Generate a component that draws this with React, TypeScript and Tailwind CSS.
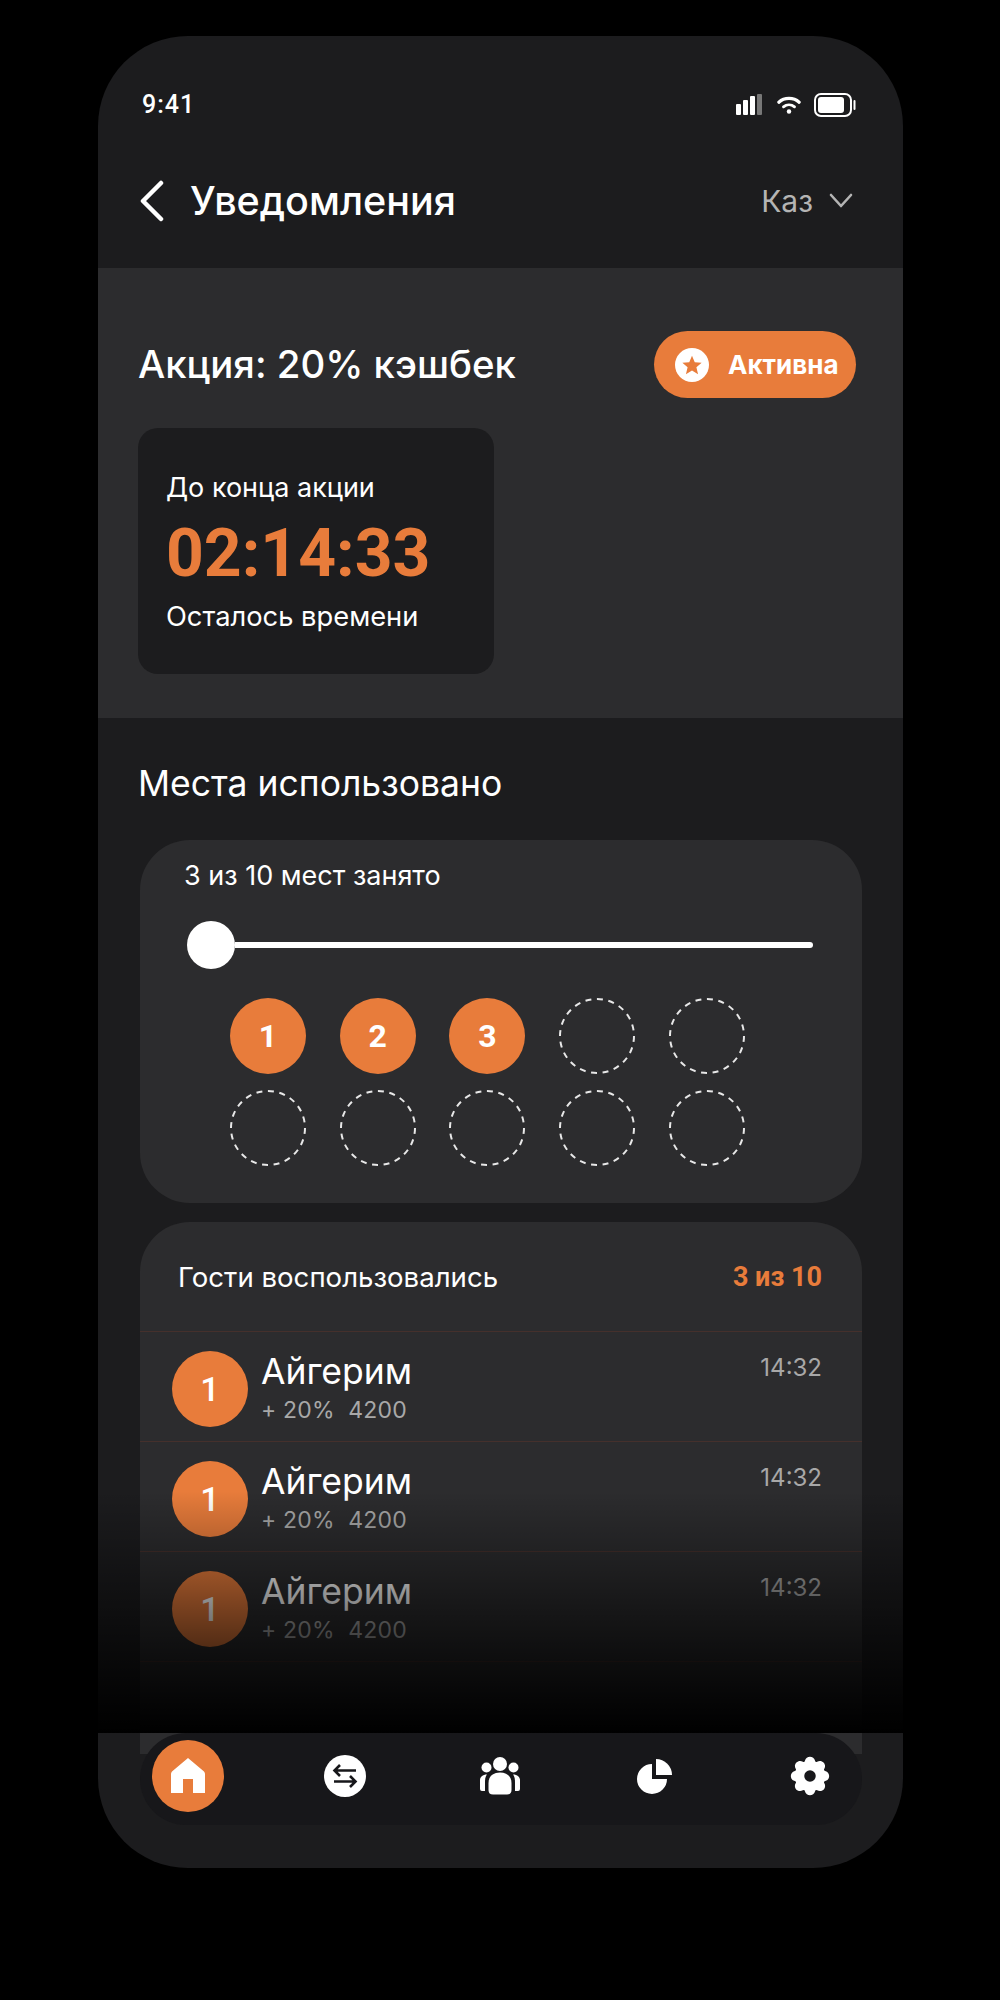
import React from "react";
import { TbSettingsFilled } from "react-icons/tb";

const F = "font-['Inter','Noto_Sans',sans-serif]";
const R = "font-['Roboto',sans-serif]";

function Chevron() {
  return (
    <svg width="26" height="42" viewBox="0 0 26 42" fill="none" stroke="white" strokeWidth="4.5" strokeLinecap="round" strokeLinejoin="round">
      <path d="M22 3 L4 21 L22 39" />
    </svg>
  );
}

function StatusIcons() {
  return (
    <div className="flex items-center">
      <svg width="26" height="22" viewBox="0 0 26 22">
        <rect x="0" y="10" width="5" height="11" rx="1" fill="#fff" />
        <rect x="7" y="6" width="5" height="15" rx="1" fill="#fff" />
        <rect x="14" y="2" width="5" height="19" rx="1" fill="#fff" />
        <rect x="21" y="0" width="5" height="21" rx="1" fill="#777" />
      </svg>
      <svg className="ml-[15px]" width="24" height="20" viewBox="0 0 26 20" fill="none" stroke="#fff" strokeLinecap="round">
        <path d="M2 7 C8 1.5 18 1.5 24 7" strokeWidth="3.4" />
        <path d="M7 12 C10.5 9 15.5 9 19 12" strokeWidth="3" />
        <circle cx="13" cy="17" r="2.4" fill="#fff" stroke="none" />
      </svg>
      <svg className="ml-[13px]" width="42" height="24" viewBox="0 0 42 24">
        <rect x="1" y="1" width="36" height="22" rx="6" fill="none" stroke="#fff" strokeWidth="2" />
        <rect x="4" y="4" width="26" height="16" rx="3" fill="#fff" />
        <path d="M40.5 8 v8" stroke="#fff" strokeWidth="2" strokeLinecap="round" />
      </svg>
    </div>
  );
}

function Seat({ n }: { n?: number }) {
  if (n) {
    return (
      <div className={`w-[76px] h-[76px] rounded-full bg-[#e87c3b] flex items-center justify-center text-white text-[32px] font-bold ${R}`}>
        {n}
      </div>
    );
  }
  return (
    <svg width="76" height="76" viewBox="0 0 76 76" fill="none" stroke="#e8e8e8" strokeWidth="2" strokeDasharray="6 5.6">
      <circle cx="38" cy="38" r="37" />
    </svg>
  );
}

function Row() {
  return (
    <div className="h-[110px] flex pl-[32px] pr-[40px] items-start border-t border-[#45302c]">
      <div className={`mt-[19px] w-[76px] h-[76px] rounded-full bg-[#e87c3b] flex items-center justify-center text-white text-[34px] font-medium shrink-0 ${R}`}>
        1
      </div>
      <div className="ml-[13px] flex-1 mt-[20px]">
        <div className="text-white text-[35.5px] leading-[40px]">Айгерим</div>
        <div className="text-[#a8a8a8] text-[23px] leading-[28px] mt-[4px] tracking-[0.2px] whitespace-pre">+ 20%  4200</div>
      </div>
      <div className="mt-[21px] text-[#a8a8a8] text-[24px] leading-[30px]">14:32</div>
    </div>
  );
}

function NavSlot({ children }: { children: React.ReactNode }) {
  return <div className="w-[46px] flex items-center justify-center">{children}</div>;
}

export default function App() {
  return (
    <div className={`bg-black w-[1000px] h-[2000px] pt-[36px] pl-[98px] ${F}`}>
      <div className="relative w-[805px] h-[1832px] rounded-[90px] bg-[#1c1c1e] overflow-hidden">
        <div className="h-[232px] flex flex-col">
          <div className="flex items-center justify-between pl-[44px] pr-[47px] pt-[54px] h-[84px]">
            <span className={`text-white text-[25px] font-medium tracking-[1px] ${R}`}>9:41</span>
            <StatusIcons />
          </div>
          <div className="flex items-center justify-between pl-[41px] pr-[50px] flex-1 pb-[4px] pt-[18px]">
            <div className="flex items-center gap-[25px]">
              <Chevron />
              <span className="text-white text-[39.5px] font-medium translate-y-[1px]">Уведомления</span>
            </div>
            <div className="flex items-center gap-[16px]">
              <span className="text-[#b4b4b4] text-[30px]">Каз</span>
              <svg width="24" height="16" viewBox="0 0 24 16" fill="none" stroke="#b4b4b4" strokeWidth="2.6" strokeLinecap="round" strokeLinejoin="round">
                <path d="M2 2 L12 13 L22 2" />
              </svg>
            </div>
          </div>
        </div>

        <section className="bg-[#2c2c2e] h-[450px] pt-[63px] pl-[40px] pr-[47px]">
          <div className="flex items-center justify-between h-[67px]">
            <h1 className="text-white text-[38.4px] font-medium leading-[64px] pb-[2px]">Акция: 20% кэшбек</h1>
            <div className="w-[202px] h-[67px] rounded-full bg-[#e87c3b] flex items-center pl-[21px] gap-[19px]">
              <div className="w-[34px] h-[34px] rounded-full bg-white flex items-center justify-center">
                <svg width="22" height="22" viewBox="0 0 24 24" fill="#e87c3b">
                  <path d="M12 2 L15 9 L22.5 9.6 L16.8 14.4 L18.6 22 L12 18 L5.4 22 L7.2 14.4 L1.5 9.6 L9 9 Z" />
                </svg>
              </div>
              <span className="text-white text-[26px] font-bold">Активна</span>
            </div>
          </div>
          <div className="mt-[30px] w-[356px] h-[246px] rounded-[20px] bg-[#1c1c1e] pl-[28px] pt-[43px] flex flex-col">
            <div className="text-white text-[27px] leading-[34px]">До конца акции</div>
            <div className={`text-[#e87c3b] text-[66px] leading-[76px] font-bold mt-[11px] ${R}`}>02:14:33</div>
            <div className="text-white text-[27.3px] leading-[34px] mt-[8px]">Осталось времени</div>
          </div>
        </section>

        <h2 className="text-white text-[35.5px] leading-[44px] mt-[44px] ml-[40px]">Места использовано</h2>

        <div className="ml-[42px] mr-[41px] mt-[34px] h-[363px] rounded-[50px] bg-[#2c2c2e] pt-[18px] px-[44px]">
          <div className="text-white text-[27px] leading-[36px]">3 из 10 мест занято</div>
          <div className="flex items-center mt-[27px] pr-[5px] ml-[3px]">
            <div className="w-[48px] h-[48px] rounded-full bg-white shrink-0" />
            <div className="flex-1 h-[6px] rounded-r-full bg-white" />
          </div>
          <div className="grid grid-cols-5 w-[515px] gap-x-[33.5px] gap-y-[16px] mt-[29px] ml-[46px]">
            <Seat n={1} />
            <Seat n={2} />
            <Seat n={3} />
            <Seat />
            <Seat />
            <Seat />
            <Seat />
            <Seat />
            <Seat />
            <Seat />
          </div>
        </div>

        <div className="ml-[42px] mr-[41px] mt-[19px] h-[532px] rounded-t-[50px] bg-[#2c2c2e]">
          <div className="h-[109px] flex items-center justify-between pl-[38px] pr-[40px] pt-[2px] text-[27.6px]">
            <span className="text-white">Гости воспользовались</span>
            <span className={`text-[#e87c3b] font-bold ${R} text-[27px]`}>3 из 10</span>
          </div>
          <Row />
          <Row />
          <Row />
          <div className="border-t border-[#45302c]" />
        </div>

        {/* fade over the list */}
        <div className="absolute left-0 right-0 top-[1455px] h-[242px] bg-gradient-to-b from-transparent to-black" />

        {/* bottom navigation */}
        <div className="absolute left-[42px] top-[1697px] w-[722px] h-[92px] rounded-[46px] bg-[#17171a] flex items-center pl-[12px] pb-[6px]">
          <div className="w-[72px] h-[72px] rounded-full bg-[#e87c3b] flex items-center justify-center shrink-0">
            <svg width="36" height="38" viewBox="0 0 36 38" fill="#fff">
              <path d="M18 1 L34 14.5 Q35 15.5 35 17 V36 H23 V22 H13 V36 H1 V17 Q1 15.5 2 14.5 Z" />
            </svg>
          </div>
          <div className="ml-[98px] flex items-center gap-[109px]">
            <NavSlot>
              <svg width="42" height="42" viewBox="0 0 42 42">
                <circle cx="21" cy="21" r="21" fill="#fff" />
                <path d="M32 15.5 H11 M16 10 L10.5 15.5 L16 21 M10 26.5 H31 M26 21 L31.5 26.5 L26 32" fill="none" stroke="#17171a" strokeWidth="2.6" />
              </svg>
            </NavSlot>
            <NavSlot>
              <svg width="40" height="38" viewBox="0 0 40 38" fill="#fff">
                <circle cx="20" cy="7" r="7" />
                <circle cx="6.5" cy="10.5" r="5" />
                <circle cx="33.5" cy="10.5" r="5" />
                <path d="M8.5 33 V26 C8.5 19.5 13 15.5 20 15.5 C27 15.5 31.5 19.5 31.5 26 V33 Q31.5 37.5 27 37.5 H13 Q8.5 37.5 8.5 33 Z" />
                <path d="M7 17.5 C5 20 5 23 5 26 V34 H2 Q0 34 0 32 V23 C0 20 2.5 17.5 7 17.5 Z" />
                <path d="M33 17.5 C35 20 35 23 35 26 V34 H38 Q40 34 40 32 V23 C40 20 37.5 17.5 33 17.5 Z" />
              </svg>
            </NavSlot>
            <NavSlot>
              <svg width="36" height="35" viewBox="0 0 36 35" fill="#fff">
                <path d="M15 5 V20 H30 A15 15 0 1 1 15 5 Z" />
                <path d="M19 0 A16 16 0 0 1 35 16 H19 Z" />
              </svg>
            </NavSlot>
            <NavSlot>
              <TbSettingsFilled size={46} color="#fff" />
            </NavSlot>
          </div>
        </div>
      </div>
    </div>
  );
}
